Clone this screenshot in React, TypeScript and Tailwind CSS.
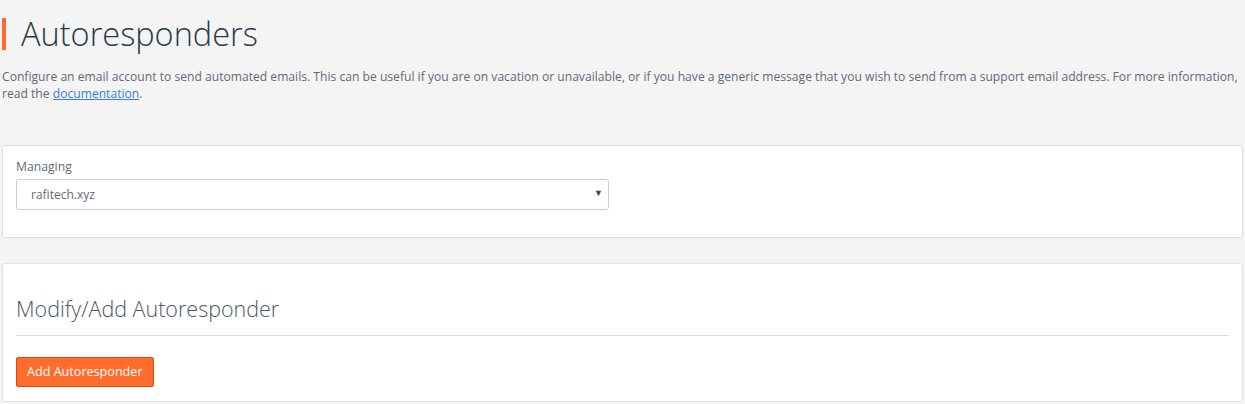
export default function App() {
  return (
    <div className="min-h-[404px] bg-[#f4f4f4] px-[2px] font-['Open_Sans',sans-serif] text-[#5f6b7a]">
      <div className="flex items-center pt-[18px]">
        <span className="h-[32px] w-[4px] bg-[#ff6c2c]" />
        <h1 className="ml-[15px] text-[32.5px] font-light leading-[32px] text-[#293a4a]">
          Autoresponders
        </h1>
      </div>

      <p className="-mr-[2px] mt-[18px] text-[12.1px] leading-[17px] tracking-[0.01px] text-[#5f6b7a]">
        Configure an email account to send automated emails. This can be useful if you are on vacation or unavailable, or if you have a generic message that you wish to send from a support email address. For more information, read the{' '}
        <a href="#" className="text-[#3a7fd5] underline">documentation</a>.
      </p>

      <div className="mt-[43px] rounded-[3px] border border-[#ddd] bg-white px-[13px] pb-[27px] pt-[12px]">
        <label className="block text-[12.2px] leading-[18px] text-[#5f6b7a]">Managing</label>
        <div className="relative mt-[3px] w-[593px]">
          <div className="flex h-[31px] items-center rounded-[3px] border border-[#ccc] bg-white pl-[14px] text-[12px] text-[#5f6b7a]">
            rafitech.xyz
          </div>
          <span className="absolute right-[6px] top-[9px] text-[9px] leading-none text-[#444]">▼</span>
        </div>
      </div>

      <div className="mt-[25px] rounded-[3px] border border-[#dde2e4] bg-white px-[13px] pb-[14px]">
        <h2 className="pt-[30px] text-[21.5px] font-light leading-[30px] text-[#4a5866]">
          Modify/Add Autoresponder
        </h2>
        <div className="mt-[11px] border-t border-[#ddd]" />
        <button
          type="button"
          className="mt-[21px] h-[30px] rounded-[2px] border border-[#d8491b] bg-[#ff6c2c] px-[10px] text-[12.6px] text-white"
        >
          Add Autoresponder
        </button>
      </div>
    </div>
  )
}
